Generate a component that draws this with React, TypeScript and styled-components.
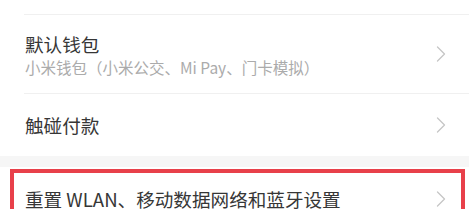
import React from "react";
import styled, { createGlobalStyle } from "styled-components";

const GlobalStyle = createGlobalStyle`
  html, body {
    margin: 0;
    padding: 0;
    background: #ffffff;
  }
  body {
    font-family: "Noto Sans CJK SC", "Noto Sans", sans-serif;
    -webkit-font-smoothing: antialiased;
  }
`;

const Page = styled.div`
  width: 469px;
  height: 209px;
  overflow: hidden;
  background: #ffffff;
  display: flex;
  flex-direction: column;
`;

const TopRemnant = styled.div`
  height: 14px;
  flex: none;
`;

const Divider = styled.div`
  height: 1px;
  margin-left: 24px;
  background: #f0f0f0;
  flex: none;
`;

const SectionGap = styled.div`
  height: 11px;
  background: #f6f6f6;
  flex: none;
`;

const Row = styled.div<{ $height: number }>`
  position: relative;
  height: ${(p) => p.$height}px;
  flex: none;
  display: flex;
  align-items: center;
  justify-content: space-between;
  padding: 0 23px 0 25px;
`;

const Texts = styled.div`
  display: flex;
  flex-direction: column;
`;

const Title = styled.div`
  font-size: 18.6px;
  line-height: 26px;
  color: #363636;
  white-space: nowrap;
`;

const Subtitle = styled.div`
  font-size: 15.5px;
  line-height: 20px;
  color: #ababab;
  white-space: nowrap;
`;

const Chevron = styled.svg`
  width: 10px;
  height: 16px;
  flex: none;
`;

const Highlight = styled.div`
  position: absolute;
  left: 10px;
  right: 4px;
  top: 2px;
  bottom: -20px;
  border: 4px solid #e8404a;
  pointer-events: none;
`;

const Arrow = () => (
  <Chevron viewBox="0 0 10 16">
    <polyline
      points="1.5,1 8.5,8 1.5,15"
      fill="none"
      stroke="#c6c6c6"
      strokeWidth="1.3"
      strokeLinecap="round"
      strokeLinejoin="round"
    />
  </Chevron>
);

export default function App() {
  return (
    <>
      <GlobalStyle />
      <Page>
        <TopRemnant />
        <Divider />
        <Row $height={78}>
          <Texts>
            <Title>默认钱包</Title>
            <Subtitle>小米钱包（小米公交、Mi Pay、门卡模拟）</Subtitle>
          </Texts>
          <Arrow />
        </Row>
        <Divider />
        <Row $height={62}>
          <Texts>
            <Title>触碰付款</Title>
          </Texts>
          <Arrow />
        </Row>
        <SectionGap />
        <Row $height={64}>
          <Texts>
            <Title>重置 WLAN、移动数据网络和蓝牙设置</Title>
          </Texts>
          <Arrow />
          <Highlight />
        </Row>
      </Page>
    </>
  );
}
